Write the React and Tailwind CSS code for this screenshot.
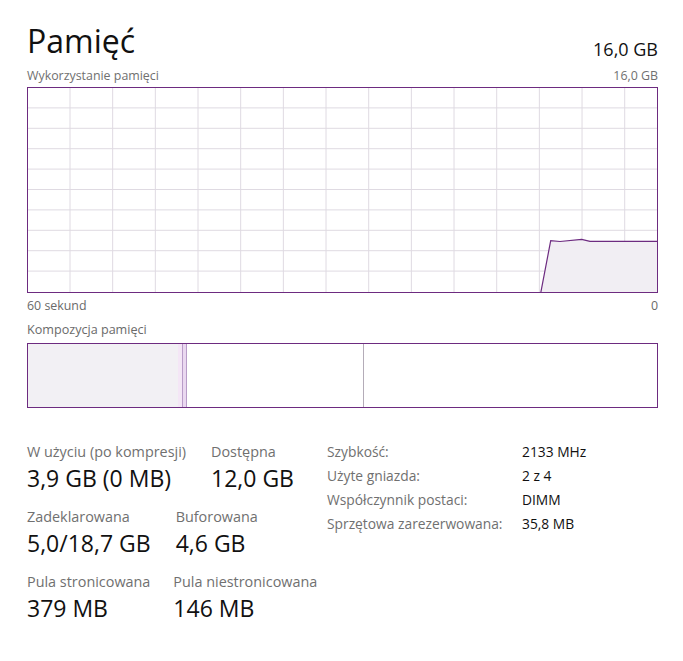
import React from "react";

const PURPLE = "#6d2b80";

function UsageChart() {
  const vx = Array.from({ length: 14 }, (_, k) => 42 + k * 42.67);
  const hy = Array.from({ length: 9 }, (_, k) => 20.4 * (k + 1) - 0.5);
  const line = "512.7,205 522.7,152.7 532,153.5 553.7,151.3 562,153.3 630,153.3";
  return (
    <svg width="629" height="204" viewBox="0 0 629 204" className="block">
      {vx.map((x) => (
        <line key={"v" + x} x1={x} y1="0" x2={x} y2="204" stroke="#dfdae2" strokeWidth="1" />
      ))}
      {hy.map((y) => (
        <line key={"h" + y} x1="0" y1={y} x2="629" y2={y} stroke="#dfdae2" strokeWidth="1" />
      ))}
      <polygon points={line + " 630,205"} fill="#f1eef3" />
      <polyline points={line} fill="none" stroke={PURPLE} strokeWidth="1.2" />
    </svg>
  );
}

function Stat({ label, value }) {
  return (
    <div className="flex flex-col">
      <span className="text-[14.4px] leading-[20px] text-[#707070] whitespace-nowrap">{label}</span>
      <span className="text-[23px] leading-[32px] text-[#111] whitespace-nowrap">{value}</span>
    </div>
  );
}

export default function App() {
  return (
    <div className="w-[683px] h-[661px] bg-white pl-[27px] pr-[25px] font-['Open_Sans',sans-serif] overflow-hidden">
      <div className="flex items-end justify-between pt-[18px]">
        <span className="text-[32px] leading-[46px] text-[#111] font-normal">Pamięć</span>
        <span className="text-[18px] leading-[26px] text-[#111] mb-[2px]">16,0 GB</span>
      </div>
      <div className="flex justify-between mt-[4px] text-[12.4px] leading-[16px] text-[#707070]">
        <span>Wykorzystanie pamięci</span>
        <span>16,0 GB</span>
      </div>
      <div className="mt-[3px] h-[206px] border border-[#6d2b80]">
        <UsageChart />
      </div>
      <div className="flex justify-between mt-[4px] text-[12.4px] leading-[18px] text-[#6a6a6a]">
        <span>60 sekund</span>
        <span>0</span>
      </div>
      <div className="mt-[6px] text-[12.6px] leading-[18px] text-[#6a6a6a]">Kompozycja pamięci</div>
      <div className="mt-[4px] h-[65px] border border-[#6d2b80] flex">
        <div className="w-[150px] bg-[#f2f0f4]" />
        <div className="w-[4px] bg-[#f4e6f6]" />
        <div className="w-px bg-[#b89cc8]" />
        <div className="w-[3px] bg-[#ead8f0]" />
        <div className="w-px bg-[#b89cc8]" />
        <div className="w-[176px] bg-white" />
        <div className="w-px bg-[#b4acb8]" />
        <div className="flex-1 bg-white" />
      </div>
      <div className="flex items-start mt-[34px]">
        <div className="w-[300px] flex flex-col gap-[13px]">
          <div className="flex gap-[25px]">
            <Stat label="W użyciu (po kompresji)" value="3,9 GB (0 MB)" />
            <Stat label="Dostępna" value="12,0 GB" />
          </div>
          <div className="flex gap-[25px]">
            <Stat label="Zadeklarowana" value="5,0/18,7 GB" />
            <Stat label="Buforowana" value="4,6 GB" />
          </div>
          <div className="flex gap-[23px]">
            <Stat label="Pula stronicowana" value="379 MB" />
            <Stat label="Pula niestronicowana" value="146 MB" />
          </div>
        </div>
        <div className="grid grid-cols-[195px_auto] auto-rows-[24px] text-[13.8px] leading-[24px] -mt-[2px]">
          <span className="text-[#707070]">Szybkość:</span>
          <span className="text-[#111]">2133 MHz</span>
          <span className="text-[#707070]">Użyte gniazda:</span>
          <span className="text-[#111]">2 z 4</span>
          <span className="text-[#707070]">Współczynnik postaci:</span>
          <span className="text-[#111]">DIMM</span>
          <span className="text-[#707070]">Sprzętowa zarezerwowana:</span>
          <span className="text-[#111]">35,8 MB</span>
        </div>
      </div>
    </div>
  );
}
